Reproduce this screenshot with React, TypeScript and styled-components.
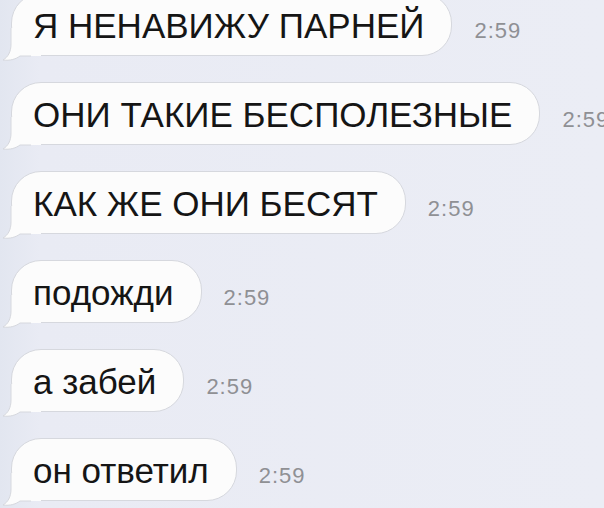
import React from "react";
import styled, { createGlobalStyle } from "styled-components";

const Global = createGlobalStyle`
  html, body {
    margin: 0;
    padding: 0;
    width: 604px;
    height: 508px;
    overflow: hidden;
    background: linear-gradient(90deg, #e2e6f0 0px, #e9ebf4 40px, #ebedf5 100%);
  }
`;

const Thread = styled.div`
  display: flex;
  flex-direction: column;
  gap: 26px;
  margin-top: -7px;
  padding-left: 11px;
  font-family: "Liberation Sans", Arial, sans-serif;
`;

const Row = styled.div`
  display: flex;
  align-items: baseline;
  gap: 22px;
  white-space: nowrap;
`;

const Bubble = styled.div`
  position: relative;
  flex: none;
  box-sizing: border-box;
  height: 63px;
  padding: 14px 27px 0 21px;
  background: #fcfcfc;
  border: 1px solid #d6d8de;
  border-radius: 30px;
  font-size: 35px;
  line-height: 35px;
  color: #151515;
`;

const Text = styled.span`
  position: relative;
  z-index: 1;
`;

const Tail = styled.svg`
  position: absolute;
  left: -11px;
  bottom: -7px;
  width: 40px;
  height: 36px;
  overflow: visible;
`;

const Time = styled.span`
  flex: none;
  font-size: 22px;
  letter-spacing: 1px;
  color: #8f9094;
`;

const messages = [
  "Я НЕНАВИЖУ ПАРНЕЙ",
  "ОНИ ТАКИЕ БЕСПОЛЕЗНЫЕ",
  "КАК ЖЕ ОНИ БЕСЯТ",
  "подожди",
  "а забей",
  "он ответил",
];

const TailShape = () => (
  <Tail viewBox="0 0 40 36">
    <path
      d="M10 2 L10 18 C10 26 7 31 2 34 C9 35 15 33 19 30 L40 30 L40 2 Z"
      fill="#fcfcfc"
    />
    <path
      d="M10 2 L10 18 C10 26 7 31 2 34 C9 35 15 33 19 30 L30 30"
      fill="none"
      stroke="#d6d8de"
      strokeWidth="1"
    />
  </Tail>
);

export default function App() {
  return (
    <>
      <Global />
      <Thread>
        {messages.map((m) => (
          <Row key={m}>
            <Bubble>
              <TailShape />
              <Text>{m}</Text>
            </Bubble>
            <Time>2:59</Time>
          </Row>
        ))}
      </Thread>
    </>
  );
}
